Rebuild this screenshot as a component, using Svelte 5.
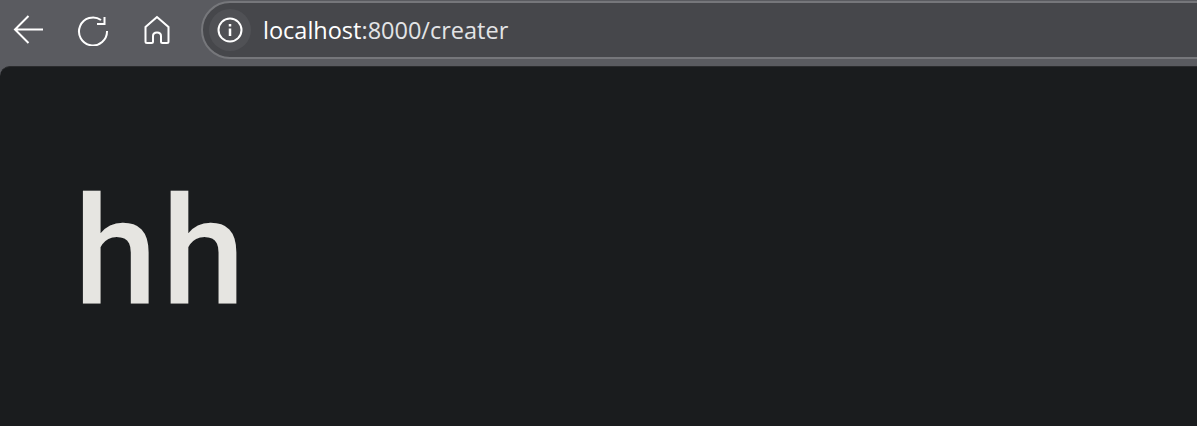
<script>
	let address = "localhost"
	let rest = ":8000/creater"
	let heading = "hh"
</script>

<div class="window">
	<header class="toolbar">
		<nav class="buttons">
			<button class="nav-btn back" aria-label="Back">
				<svg width="32" height="32" viewBox="0 0 32 32" fill="none" stroke="#fff" stroke-width="2">
					<path d="M30 15.500H2M15.500 2 2 15.500 15.500 29" />
				</svg>
			</button>
			<button class="nav-btn reload" aria-label="Reload">
				<svg width="32" height="32" viewBox="0 0 32 32" fill="none" stroke="#fff" stroke-width="2">
					<path d="M24 6A14 14 0 1 0 30 17" />
					<path d="M27.500 3V10H20" />
				</svg>
			</button>
			<button class="nav-btn home" aria-label="Home">
				<svg width="28" height="30" viewBox="0 0 28 30" fill="none" stroke="#fff" stroke-width="2">
					<path d="M14 2 2.500 12V26.500Q2.500 28 4 28H8.500Q10 28 10 26.500V21Q10 17.500 14 17.500 18 17.500 18 21V26.500Q18 28 19.500 28H24Q25.500 28 25.500 26.500V12Z" />
				</svg>
			</button>
		</nav>
		<div class="omnibox">
			<span class="chip">
				<svg width="26" height="26" viewBox="0 0 26 26" fill="none" stroke="#fff">
					<circle cx="13" cy="13" r="11.500" stroke-width="2" />
					<path d="M13 11.500V19" stroke-width="2.500" />
					<path d="M13 7V9.500" stroke-width="2.500" />
				</svg>
			</span>
			<span class="url"><span class="host">{address}</span>{rest}</span>
		</div>
	</header>
	<main class="page">
		<h1>{heading}</h1>
	</main>
</div>

<style>
	:global(body) {
		background: #5a5b60;
		overflow: hidden;
	}
	.window {
		display: flex;
		flex-direction: column;
		width: 1197px;
		height: 426px;
		overflow: hidden;
	}
	.toolbar {
		display: flex;
		align-items: flex-start;
		height: 66px;
		flex: none;
		background: #5a5b60;
	}
	.buttons {
		display: flex;
		align-items: center;
		height: 60px;
		width: 201px;
		flex: none;
	}
	.nav-btn {
		display: flex;
		align-items: center;
		justify-content: center;
		padding: 0;
		border: 0;
		background: none;
	}
	.back {
		margin-left: 13px;
	}
	.reload {
		margin-left: 32px;
	}
	.home {
		margin-left: 34px;
	}
	.omnibox {
		display: flex;
		align-items: center;
		flex: none;
		box-sizing: border-box;
		width: 1100px;
		height: 58px;
		margin-top: 1px;
		padding-left: 6px;
		background: #46474b;
		border: 2px solid #76777b;
		border-radius: 29px;
	}
	.chip {
		display: flex;
		align-items: center;
		justify-content: center;
		width: 42px;
		height: 42px;
		flex: none;
		border-radius: 50%;
		background: #505155;
	}
	.url {
		margin-left: 12px;
		font-family: "Open Sans", "Noto Sans", sans-serif;
		font-size: 23.5px;
		color: #e3e4e6;
		white-space: nowrap;
	}
	.host {
		color: #fff;
	}
	.page {
		flex: 1;
		background: #1a1c1e;
		border-top: 1px solid #2a2b2d;
		border-top-left-radius: 10px;
		padding: 96px 0 0 74px;
	}
	h1 {
		margin: 0;
		font-family: Roboto, "Open Sans", sans-serif;
		font-weight: 500;
		font-size: 150px;
		letter-spacing: 4.5px;
		line-height: 180px;
		color: #e6e5e1;
	}
</style>
